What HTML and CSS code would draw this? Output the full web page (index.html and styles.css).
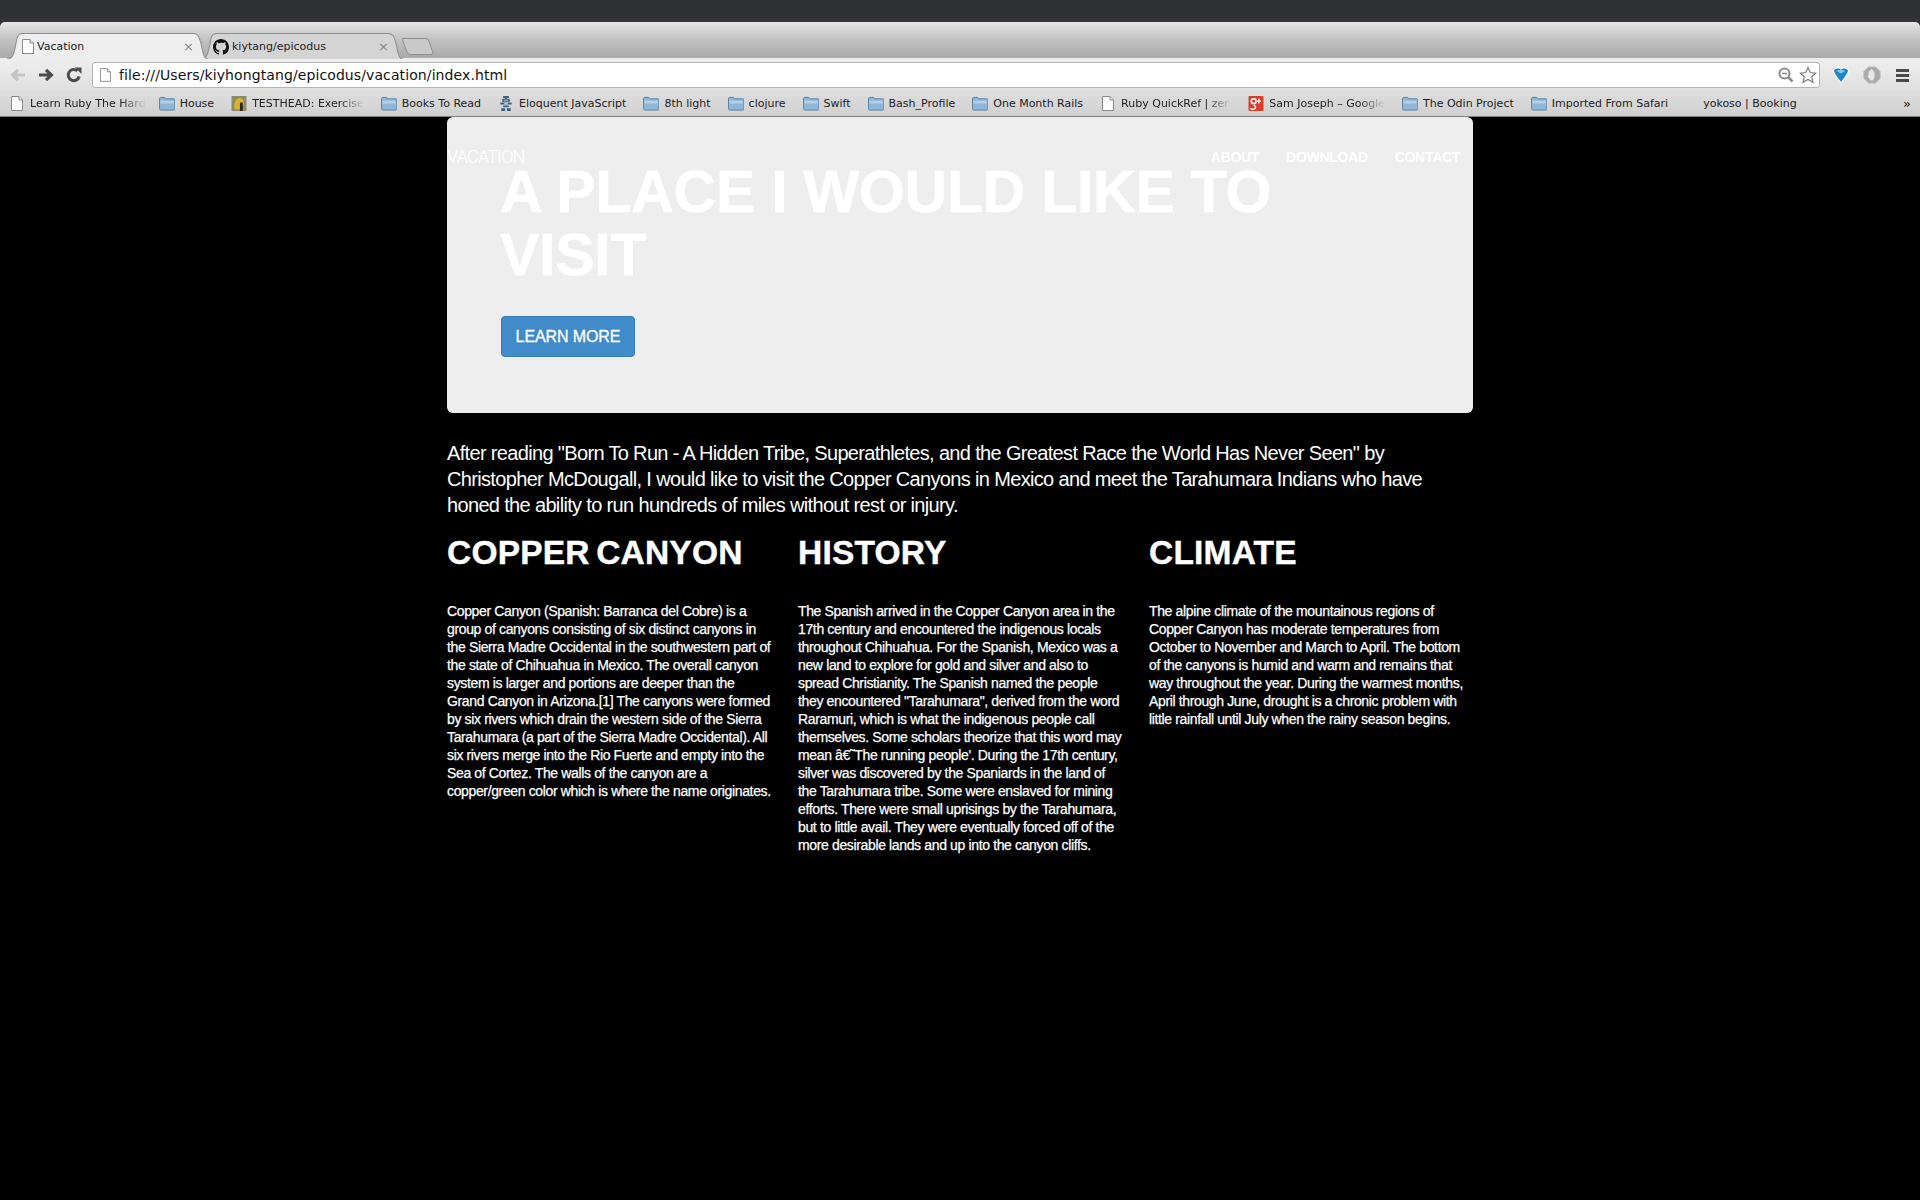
FILE: index.html
```html
<!DOCTYPE html>
<html>
<head>
  <title>Vacation</title>
  <link rel="stylesheet" href="styles.css">
</head>
<body>
  <svg class="defs" width="0" height="0">
    <symbol id="doc" viewBox="0 0 12 15">
      <path d="M.5.5h7.5l3.5 3.5v10.500h-11z" fill="#fdfdfd" stroke="#8b8b8b"/>
      <path d="M8 .5v3.500h3.500" fill="#e4e4e4" stroke="#8b8b8b"/>
    </symbol>
    <symbol id="folder" viewBox="0 0 17 15">
      <path d="M.5 2.500q0-1.500 1.500-1.500h3.500q1 0 1.500 1.500h8.500q1.500 0 1.500 1.500v9q0 1.500-1.500 1.500h-13q-2 0-2-1.500z" fill="#8fb6d6" stroke="#56809f"/>
      <path d="M1.500 4.500h14v3h-14z" fill="#b4d0e6"/>
    </symbol>
  </svg>

  <div class="browser">
    <div class="tab-strip">
      <div class="tab tab-active">
        <svg class="tab-shape" viewBox="0 0 201 25" preserveAspectRatio="none"><path d="M0 25C6 25 7 20 9 10 10 3 11 .5 16 .5H186C191 .5 192 3 194 10 196 20 197 25 201 25" fill="#eeeeee" stroke="#8e8e8e"/></svg>
        <svg class="tab-icon"><use href="#doc"/></svg>
        <span class="tab-title">Vacation</span>
        <span class="tab-close">×</span>
      </div>
      <div class="tab tab-other">
        <svg class="tab-shape" viewBox="0 0 201 25" preserveAspectRatio="none"><path d="M0 25C6 25 7 20 9 10 10 3 11 .5 16 .5H186C191 .5 192 3 194 10 196 20 197 25 201 25" fill="#d4d4d4" stroke="#8e8e8e"/></svg>
        <svg class="gh-icon" viewBox="0 0 16 16"><path fill="#111" d="M8 0C3.580 0 0 3.580 0 8c0 3.540 2.290 6.530 5.470 7.590.4.070.55-.17.55-.38v-1.340c-2.230.48-2.700-1.070-2.700-1.070-.36-.93-.89-1.170-.89-1.170-.73-.5.050-.49.050-.49.800.060 1.230.830 1.230.830.710 1.220 1.870.870 2.330.660.070-.520.280-.870.510-1.070-1.780-.2-3.640-.890-3.640-3.950 0-.870.310-1.590.820-2.150-.080-.2-.360-1.020.080-2.120 0 0 .670-.210 2.200.820A7.600 7.600 0 0 1 8 3.870c.680 0 1.360.090 2 .270 1.530-1.040 2.200-.820 2.200-.820.440 1.100.160 1.920.080 2.120.510.560.820 1.270.820 2.150 0 3.070-1.870 3.750-3.650 3.950.290.250.540.730.540 1.480v2.190c0 .210.150.460.550.380A8 8 0 0 0 16 8c0-4.420-3.580-8-8-8z"/></svg>
        <span class="tab-title">kiytang/epicodus</span>
        <span class="tab-close">×</span>
      </div>
      <svg class="new-tab" viewBox="0 0 32 17"><path d="M.8.500H24Q26 .5 27 3L31 15Q31.500 16.500 30 16.500H8Q6 16.500 5 14L.5 2Q0 .5.800.5z" fill="#c9c9c9" stroke="#8e8e8e"/></svg>
    </div>

    <div class="toolbar">
      <svg class="nav-icon" viewBox="0 0 16 14"><path d="M15 7H3M8 1.800 2.600 7 8 12.200" fill="none" stroke="#c4c4c4" stroke-width="3.200"/></svg>
      <svg class="nav-icon" viewBox="0 0 16 14"><path d="M1 7h12M8 1.800 13.400 7 8 12.200" fill="none" stroke="#4c4c4c" stroke-width="3.200"/></svg>
      <svg class="nav-icon" viewBox="0 0 16 16"><path d="M13.200 9.500A5.600 5.600 0 1 1 11.500 3.800" fill="none" stroke="#4c4c4c" stroke-width="3"/><path d="M9 .5h6.500V7z" fill="#4c4c4c"/></svg>
      <div class="omnibox">
        <svg class="omni-doc"><use href="#doc"/></svg>
        <span class="url">file:///Users/kiyhongtang/epicodus/vacation/index.html</span>
        <svg class="zoom-icon" viewBox="0 0 16 16"><circle cx="6.500" cy="6.500" r="5" fill="none" stroke="#8b8b8b" stroke-width="2"/><path d="M10.500 10.500l4 4" stroke="#8b8b8b" stroke-width="2.500"/><path d="M4 6.500h5" stroke="#8b8b8b" stroke-width="1.500"/></svg>
        <svg class="star-icon" viewBox="0 0 18 18"><path d="M9 1.500l2.300 5 5.500.6-4.100 3.700 1.200 5.500L9 13.500l-4.900 2.800 1.200-5.500L1.200 7.100l5.500-.6z" fill="#fff" stroke="#7d7d7d" stroke-width="1.200"/></svg>
      </div>
      <svg class="ext-balloon" viewBox="0 0 18 18"><path d="M1 4.500Q5 0 9 3 13 0 17 4.500 15 10 9 17 3 10 1 4.500z" fill="#1d86c9" stroke="#f4f4f4" stroke-width="1.500"/><path d="M4.500 5Q9 2.800 13 5L9 7.500z" fill="#7fd0f4"/></svg>
      <svg class="ext-block" viewBox="0 0 18 18"><path d="M5.500.8h7l4.700 4.700v7l-4.700 4.700h-7L.8 12.500v-7z" fill="#a9a9a9" stroke="#c9c9c9"/><path d="M5.500 9V5.500h1.200V4h1.300v-.7h1.200V4h1.200v1.500h1.100v5.500L10 14.500H7.500L4.500 10.500z" fill="#e6e6e6"/></svg>
      <div class="menu-icon"><span></span><span></span><span></span></div>
    </div>

    <div class="bookmarks">
      <div class="bm bm-first"><svg class="bm-icon"><use href="#doc"/></svg><span class="bm-text bm-fade">Learn Ruby The Hard</span></div>
      <div class="bm"><svg class="bm-icon"><use href="#folder"/></svg><span class="bm-text">House</span></div>
      <div class="bm">
        <svg class="bm-icon" viewBox="0 0 16 16"><rect width="16" height="16" fill="#8c8c6a"/><path d="M3 14Q2 4 8 2q5 0 5 4v4H9v4z" fill="#d8b32a"/><path d="M9 7h3v9H9z" fill="#27251c"/></svg>
        <span class="bm-text bm-fade">TESTHEAD: Exercise</span>
      </div>
      <div class="bm"><svg class="bm-icon"><use href="#folder"/></svg><span class="bm-text">Books To Read</span></div>
      <div class="bm">
        <svg class="bm-icon" viewBox="0 0 16 16"><path d="M5 0h6v2H9v1h3v3H4V3h3V2H5zM2 7h12v2H2zM5 10h6v2H5zM3 13h4v3H3zM9 13h4v3H9z" fill="#3f5f78"/><path d="M6 4h4v1H6zM6 7h4v2H6z" fill="#a9c9dc"/></svg>
        <span class="bm-text">Eloquent JavaScript</span>
      </div>
      <div class="bm"><svg class="bm-icon"><use href="#folder"/></svg><span class="bm-text">8th light</span></div>
      <div class="bm"><svg class="bm-icon"><use href="#folder"/></svg><span class="bm-text">clojure</span></div>
      <div class="bm"><svg class="bm-icon"><use href="#folder"/></svg><span class="bm-text">Swift</span></div>
      <div class="bm"><svg class="bm-icon"><use href="#folder"/></svg><span class="bm-text">Bash_Profile</span></div>
      <div class="bm"><svg class="bm-icon"><use href="#folder"/></svg><span class="bm-text">One Month Rails</span></div>
      <div class="bm"><svg class="bm-icon"><use href="#doc"/></svg><span class="bm-text bm-fade">Ruby QuickRef | zen</span></div>
      <div class="bm">
        <svg class="bm-icon" viewBox="0 0 16 16"><rect width="16" height="16" rx="1" fill="#d6402b"/><circle cx="5.500" cy="5.500" r="2.600" fill="none" stroke="#fff" stroke-width="1.600"/><path d="M5.500 9.500q3 1.500 1.500 4-3 1.500-5-.5M11 3v5M8.700 5.500h4.600" fill="none" stroke="#fff" stroke-width="1.500"/></svg>
        <span class="bm-text bm-fade">Sam Joseph – Google</span>
      </div>
      <div class="bm"><svg class="bm-icon"><use href="#folder"/></svg><span class="bm-text">The Odin Project</span></div>
      <div class="bm"><svg class="bm-icon"><use href="#folder"/></svg><span class="bm-text">Imported From Safari</span></div>
      <div class="bm bm-plain"><span class="bm-text">yokoso | Booking</span></div>
      <span class="bm-more">»</span>
    </div>
  </div>

  <div class="container">
    <div class="hero">
      <div class="site-nav">
        <a class="brand">VACATION</a>
        <div class="nav-links">
          <a>ABOUT</a>
          <a>DOWNLOAD</a>
          <a>CONTACT</a>
        </div>
      </div>
      <h1>A PLACE I WOULD LIKE TO VISIT</h1>
      <a class="btn-learn">LEARN MORE</a>
    </div>

    <p class="lead">After reading "Born To Run - A Hidden Tribe, Superathletes, and the Greatest Race the World Has Never Seen" by Christopher McDougall, I would like to visit the Copper Canyons in Mexico and meet the Tarahumara Indians who have honed the ability to run hundreds of miles without rest or injury.</p>

    <div class="columns">
      <div class="col">
        <h3>COPPER CANYON</h3>
        <p>Copper Canyon (Spanish: Barranca del Cobre) is a group of canyons consisting of six distinct canyons in the Sierra Madre Occidental in the southwestern part of the state of Chihuahua in Mexico. The overall canyon system is larger and portions are deeper than the Grand Canyon in Arizona.[1] The canyons were formed by six rivers which drain the western side of the Sierra Tarahumara (a part of the Sierra Madre Occidental). All six rivers merge into the Rio Fuerte and empty into the Sea of Cortez. The walls of the canyon are a copper/green color which is where the name originates.</p>
      </div>
      <div class="col">
        <h3>HISTORY</h3>
        <p>The Spanish arrived in the Copper Canyon area in the 17th century and encountered the indigenous locals throughout Chihuahua. For the Spanish, Mexico was a new land to explore for gold and silver and also to spread Christianity. The Spanish named the people they encountered "Tarahumara", derived from the word Raramuri, which is what the indigenous people call themselves. Some scholars theorize that this word may mean â€˜The running people'. During the 17th century, silver was discovered by the Spaniards in the land of the Tarahumara tribe. Some were enslaved for mining efforts. There were small uprisings by the Tarahumara, but to little avail. They were eventually forced off of the more desirable lands and up into the canyon cliffs.</p>
      </div>
      <div class="col">
        <h3>CLIMATE</h3>
        <p>The alpine climate of the mountainous regions of Copper Canyon has moderate temperatures from October to November and March to April. The bottom of the canyons is humid and warm and remains that way throughout the year. During the warmest months, April through June, drought is a chronic problem with little rainfall until July when the rainy season begins.</p>
      </div>
    </div>
  </div>
</body>
</html>
```
FILE: styles.css
```css
html, body {
  margin: 0;
  background-color: #000;
}
body {
  min-height: 1200px;
  overflow: hidden;
  font-family: "Liberation Sans", Arial, sans-serif;
  color: #fff;
}
.defs {
  display: block;
  height: 0;
}

/* browser window */
.browser {
  background-color: #333539;
  background-image: linear-gradient(#2f3034, #3d3f44);
  padding-top: 22px;
  font-family: "DejaVu Sans", sans-serif;
}
.tab-strip {
  display: flex;
  align-items: flex-start;
  height: 36px;
  padding: 11px 0 0 7px;
  box-sizing: border-box;
  border-radius: 5px 5px 0 0;
  background-image: linear-gradient(#e6e6e6, #c4c4c4 45%, #a9a9a9);
}
.tab {
  position: relative;
  display: flex;
  align-items: center;
  width: 201px;
  height: 25px;
  padding-top: 2px;
  box-sizing: border-box;
  font-size: 11px;
  color: #222;
}
.tab-active {
  z-index: 1;
}
.tab-other {
  margin-left: -7px;
  width: 202px;
}
.tab-shape {
  position: absolute;
  left: 0;
  top: 0;
  width: 100%;
  height: 26px;
}
.tab-icon {
  position: relative;
  width: 12px;
  height: 15px;
  margin-left: 15px;
}
.gh-icon {
  position: relative;
  width: 16px;
  height: 16px;
  margin-left: 12px;
}
.tab-title {
  position: relative;
  margin-left: 3px;
  flex: 1;
}
.tab-close {
  position: relative;
  margin-right: 14px;
  font-size: 13px;
  color: #8a8a8a;
}
.new-tab {
  width: 32px;
  height: 17px;
  margin: 5px 0 0 -1px;
}

.toolbar {
  display: flex;
  align-items: center;
  height: 32px;
  padding-top: 2px;
  box-sizing: border-box;
  background-image: linear-gradient(#efefef, #e0e0e0);
}
.nav-icon {
  width: 16px;
  height: 16px;
  margin-left: 10px;
  margin-right: 2px;
}
.omnibox {
  display: flex;
  align-items: center;
  width: 1728px;
  height: 26px;
  margin-left: 8px;
  box-sizing: border-box;
  background-color: #fff;
  border: 1px solid #b4b4b4;
  border-radius: 3px;
}
.omni-doc {
  width: 11px;
  height: 14px;
  margin-left: 7px;
}
.url {
  flex: 1;
  margin-left: 8px;
  font-size: 14px;
  letter-spacing: 0.1px;
  color: #111;
}
.zoom-icon {
  width: 16px;
  height: 16px;
  margin-right: 5px;
}
.star-icon {
  width: 18px;
  height: 18px;
  margin-right: 2px;
}
.ext-balloon {
  width: 18px;
  height: 18px;
  margin-left: 12px;
}
.ext-block {
  width: 18px;
  height: 18px;
  margin-left: 13px;
}
.menu-icon {
  width: 13px;
  margin-left: 15px;
}
.menu-icon span {
  display: block;
  height: 3px;
  margin: 2px 0;
  background-color: #4a4a4a;
}

.bookmarks {
  display: flex;
  align-items: center;
  height: 27px;
  padding-left: 9px;
  box-sizing: border-box;
  border-bottom: 1px solid #7e7e7e;
  background-image: linear-gradient(#dedede, #d0d0d0);
  font-size: 11px;
  color: #222;
  white-space: nowrap;
}
.bm {
  display: flex;
  align-items: center;
  margin-right: 17px;
}
.bm-first {
  margin-right: 13px;
}
.bm-icon {
  width: 16px;
  height: 15px;
  margin-right: 5px;
}
.bm-fade {
  -webkit-mask-image: linear-gradient(to right, #000 78%, transparent);
  mask-image: linear-gradient(to right, #000 78%, transparent);
}
.bm-plain {
  margin-left: 18px;
}
.bm-more {
  margin-left: auto;
  margin-right: 9px;
  font-size: 13px;
}

/* page */
.container {
  width: 1026px;
  margin: 0 auto;
}
.hero {
  position: relative;
  height: 296px;
  padding: 44px 0 0 53px;
  box-sizing: border-box;
  background-color: #eeeeee;
  border-radius: 6px;
}
.site-nav {
  position: absolute;
  left: 0;
  right: 13px;
  top: 29px;
  display: flex;
  justify-content: space-between;
  align-items: center;
}
.brand {
  font-family: Roboto, "Liberation Sans", sans-serif;
  font-weight: 300;
  font-size: 18px;
  letter-spacing: -0.8px;
}
.nav-links {
  display: flex;
  gap: 27px;
  font-size: 14px;
  font-weight: bold;
  letter-spacing: -0.3px;
}
.hero h1 {
  width: 860px;
  margin: 0;
  font-size: 59px;
  line-height: 63px;
  font-weight: bold;
  letter-spacing: -0.25px;
  -webkit-text-stroke: 0.5px #fff;
}
.btn-learn {
  display: inline-block;
  width: 134px;
  height: 41px;
  margin: 29px 0 0 1px;
  box-sizing: border-box;
  background-color: #428bca;
  border: 1px solid #357ebd;
  border-radius: 4px;
  font-size: 16px;
  line-height: 39px;
  text-align: center;
  letter-spacing: -0.1px;
  -webkit-text-stroke: 0.3px #fff;
}
.lead {
  margin: 27px 0 0;
  font-size: 20px;
  line-height: 26px;
  letter-spacing: -0.66px;
}
.columns {
  display: grid;
  grid-template-columns: repeat(3, 325px);
  column-gap: 26px;
}
.col h3 {
  margin: 17px 0 0;
  font-size: 33.5px;
  line-height: 36px;
  font-weight: bold;
  letter-spacing: 0.2px;
  word-spacing: -3px;
  -webkit-text-stroke: 0.4px #fff;
}
.col p {
  margin: 31px 0 0;
  font-size: 14px;
  line-height: 18px;
  letter-spacing: -0.36px;
  -webkit-text-stroke: 0.25px #fff;
}
```
